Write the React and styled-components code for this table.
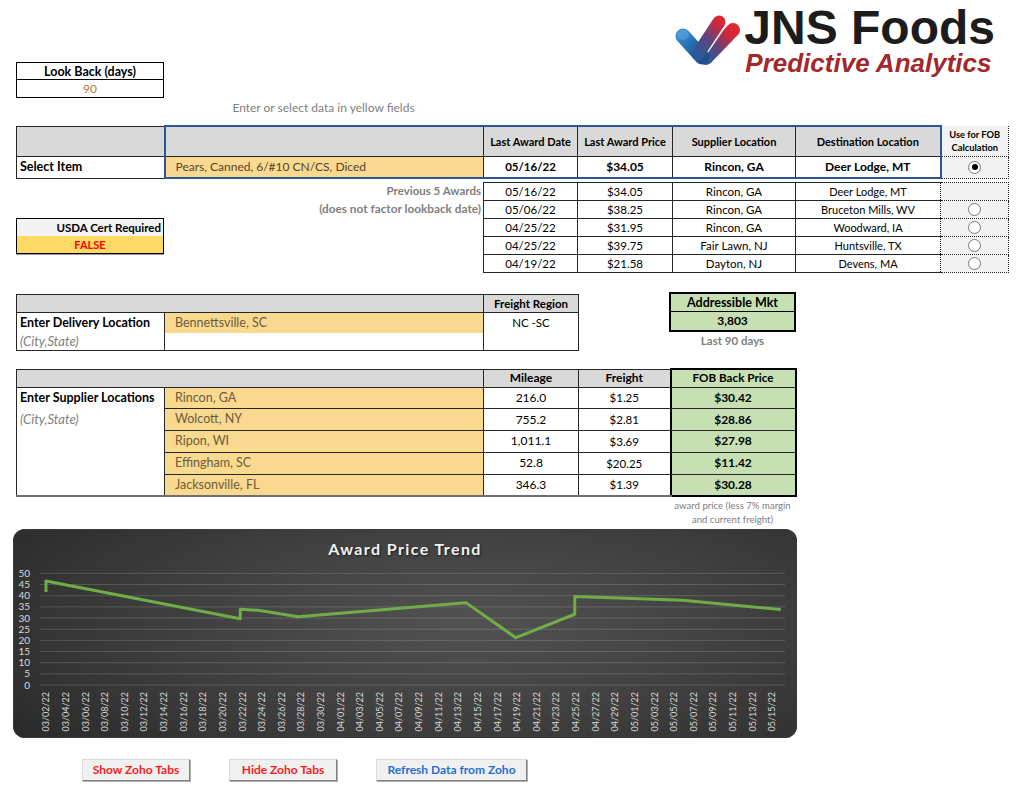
import React from 'react'
import styled, { createGlobalStyle } from 'styled-components'

const YELLOW = '#f8d98f'
const GRAY = '#d9d9d9'
const GREEN = '#c6e0b4'
const BLUE = '#2f5597'
const LINE = '#262626'

const GlobalStyle = createGlobalStyle`
  html, body {
    margin: 0;
    padding: 0;
    background: #fff;
  }
  body {
    font-family: Lato, 'Liberation Sans', sans-serif;
    color: #000;
  }
`

const Page = styled.div`
  width: 1024px;
  height: 790px;
  padding-left: 16px;
  box-sizing: border-box;
  overflow: hidden;
`

const TopArea = styled.div`
  display: grid;
  grid-template-columns: 148px 319px 1fr;
  grid-template-rows: 62px 36px 27px;
`

const Logo = styled.div`
  grid-column: 3;
  grid-row: 1 / 3;
  justify-self: end;
  margin-right: 29px;
  padding-top: 6px;
  display: flex;
  align-items: flex-start;
  gap: 5px;
`

const Brand = styled.div`
  display: flex;
  flex-direction: column;
  font-family: 'Liberation Sans', Arial, sans-serif;
  font-weight: 700;
`

const BrandName = styled.div`
  font-size: 48px;
  line-height: 44px;
  color: #1c1c1c;
  margin-left: -3px;
`

const BrandTag = styled.div`
  font-size: 26px;
  line-height: 26px;
  font-style: italic;
  color: #a3282b;
  margin-left: -2px;
`

const LookBack = styled.div`
  grid-column: 1;
  grid-row: 2;
  border: 1px solid #000;
  display: grid;
  grid-template-rows: 17px 17px;
`

const LookBackHead = styled.div`
  border-bottom: 1px solid #000;
  font-size: 12.5px;
  font-weight: 700;
  text-align: center;
  line-height: 17px;
`

const LookBackValue = styled.div`
  font-size: 12px;
  color: #b9743a;
  text-align: center;
  line-height: 17px;
`

const Hint = styled.div`
  grid-column: 2;
  grid-row: 3;
  padding-top: 2px;
  text-align: center;
  font-size: 12px;
  color: #808080;
`

const Sheet = styled.table`
  border-collapse: collapse;
  table-layout: fixed;
  margin-top: ${p => p.$mt || 0}px;
`

const Col = styled.col`
  width: ${p => p.$w}px;
`

const Cell = styled.td`
  height: ${p => p.$h || 18}px;
  padding: 0 4px;
  border: 1px solid ${LINE};
  box-sizing: border-box;
  font-size: 11.5px;
  line-height: 1;
  text-align: center;
  white-space: nowrap;
  overflow: hidden;
  background: #fff;
  ${p => p.$bt && `border-top: 2px solid ${BLUE};`}
  ${p => p.$bb && `border-bottom: 2px solid ${BLUE};`}
  ${p => p.$bl && `border-left: 2px solid ${BLUE};`}
  ${p => p.$br && `border-right: 2px solid ${BLUE};`}
  ${p => p.$openTop && 'border-top: none;'}
  ${p => p.$openBottom && 'border-bottom: none;'}
  ${p => p.$openRight && 'border-right: none;'}
  ${p => p.$foot && 'border-bottom: 2px solid #6f6f6f;'}
`

const HeadCell = styled(Cell)`
  background: ${GRAY};
  font-size: ${p => p.$size || 11}px;
  font-weight: 700;
`

const LabelCell = styled(Cell)`
  text-align: left;
  padding-left: 3px;
  font-size: ${p => (p.$note ? 13 : 12.5)}px;
  font-weight: ${p => (p.$note ? 400 : 700)};
  font-style: ${p => (p.$note ? 'italic' : 'normal')};
  color: ${p => (p.$note ? '#808080' : '#000')};
`

const InputCell = styled(Cell)`
  background: ${p => (p.$blank ? '#fff' : YELLOW)};
  text-align: left;
  padding-left: 10px;
  font-size: ${p => (p.$big ? 12 : 12.5)}px;
  color: ${p => (p.$big ? '#54452b' : '#6e5b3c')};
`

const ValueCell = styled(Cell)`
  font-size: ${p => p.$size || (p.$bold ? 12 : 11.5)}px;
  font-weight: ${p => (p.$bold ? 700 : 400)};
`

const FobCell = styled(Cell)`
  background: #f2f2f2;
  border: 1px dotted #222;
  ${p => p.$head && `
    border-top: none;
    font-size: 9.3px;
    font-weight: 700;
    line-height: 13px;
    white-space: normal;
  `}
`

const PriceCell = styled(Cell)`
  background: ${GREEN};
  font-weight: 700;
  font-size: ${p => (p.$head ? 11.7 : 12)}px;
  border-left: 2px solid #000;
  border-right: 2px solid #000;
  ${p => p.$first && 'border-top: 2px solid #000;'}
  ${p => p.$last && 'border-bottom: 2px solid #000;'}
`

const Radio = styled.span`
  display: inline-block;
  width: 11px;
  height: 11px;
  border-radius: 50%;
  border: 1px solid #7a7a7a;
  background: radial-gradient(circle at 40% 35%, #fff 55%, #e4e4e4 100%);
  position: relative;
  vertical-align: middle;

  &::after {
    content: '';
    display: ${p => (p.$on ? 'block' : 'none')};
    position: absolute;
    left: 2.5px;
    top: 2.5px;
    width: 6px;
    height: 6px;
    border-radius: 50%;
    background: #000;
  }
`

const AwardsArea = styled.div`
  display: flex;
  margin-top: 3px;
`

const AwardsSide = styled.div`
  width: 467px;
  display: flex;
  flex-direction: column;
`

const SideNote = styled.div`
  height: 18px;
  line-height: 18px;
  padding-right: 2px;
  text-align: right;
  font-size: ${p => p.$size || 11.5}px;
  font-weight: 700;
  color: #808080;
`

const UsdaBox = styled.div`
  width: 148px;
  border: 1px solid #000;
  box-sizing: border-box;
  box-shadow: 0 1px 0 #9a9a9a;
`

const UsdaHead = styled.div`
  height: 17px;
  line-height: 17px;
  padding-right: 2px;
  background: #f2f2f2;
  text-align: right;
  font-size: 11.5px;
  font-weight: 700;
`

const UsdaValue = styled.div`
  height: 17px;
  line-height: 17px;
  background: #ffd966;
  color: #ff0000;
  text-align: center;
  font-size: 11px;
  font-weight: 700;
`

const MidArea = styled.div`
  display: flex;
  align-items: flex-start;
  margin-top: 19px;
`

const MktBlock = styled.div`
  margin-left: 90px;
  width: 127px;
`

const MktBox = styled.div`
  border: 2px solid #000;
  background: ${GREEN};
  box-sizing: border-box;
  height: 40px;
  display: grid;
  grid-template-rows: 1fr 1fr;
  font-size: 12.5px;
  font-weight: 700;
  text-align: center;
`

const MktHead = styled.div`
  border-bottom: 1px solid #000;
  line-height: 17px;
`

const MktValue = styled.div`
  line-height: 18px;
  font-size: 12px;
`

const MktNote = styled.div`
  margin-top: 2px;
  text-align: center;
  font-size: 11.5px;
  font-weight: 700;
  color: #808080;
`

const SupplierArea = styled.div`
  margin-top: 17px;
`

const PriceNote = styled.div`
  margin-left: 650px;
  width: 133px;
  padding-top: 2px;
  text-align: center;
  font-size: 9.6px;
  line-height: 14px;
  color: #808080;
`

const ChartCard = styled.div`
  margin-top: 2px;
  margin-left: -3px;
  width: 784px;
  height: 209px;
  border-radius: 12px;
  overflow: hidden;
  background: radial-gradient(ellipse 75% 95% at 58% 45%, #525252 0%, #3f3f3f 50%, #282828 100%);
  box-shadow: inset 0 0 0 1px #3a3a3a;
`

const ChartTitle = styled.div`
  height: 36px;
  box-sizing: border-box;
  padding-top: 11px;
  line-height: 18px;
  text-align: center;
  color: #f2f2f2;
  font-size: 16px;
  font-weight: 700;
  letter-spacing: 1.4px;
  text-shadow: 1px 1px 2px rgba(0, 0, 0, 0.6);
`

const ButtonRow = styled.div`
  display: flex;
  gap: 39px;
  margin-top: 21px;
  padding-left: 66px;
`

const ZohoButton = styled.button`
  width: ${p => p.$w}px;
  height: 22px;
  padding: 0;
  background: #f0f0f0;
  border: 1px solid #dadada;
  border-right-color: #7f7f7f;
  border-bottom-color: #7f7f7f;
  box-shadow: 1px 1px 0 #b0b0b0;
  font-family: Lato, 'Liberation Sans', sans-serif;
  font-size: 12px;
  font-weight: 700;
  color: ${p => (p.$tone === 'blue' ? '#1f6fd1' : '#ff1a1a')};
`

const LogoMark = () => (
  <svg width="74" height="62" viewBox="0 0 74 62">
    <defs>
      <linearGradient id="jnsGrad" gradientUnits="userSpaceOnUse" x1="26" y1="54" x2="64" y2="16">
        <stop offset="0" stopColor="#1b5f9f" />
        <stop offset="0.45" stopColor="#5a4680" />
        <stop offset="0.8" stopColor="#d2283a" />
        <stop offset="1" stopColor="#e5262c" />
      </linearGradient>
      <linearGradient id="jnsBlue" gradientUnits="userSpaceOnUse" x1="8" y1="22" x2="36" y2="54">
        <stop offset="0" stopColor="#4a9ad8" />
        <stop offset="0.5" stopColor="#2570b3" />
        <stop offset="1" stopColor="#1b4f8c" />
      </linearGradient>
    </defs>
    <line x1="38" y1="52" x2="65" y2="24" stroke="url(#jnsGrad)" strokeWidth="14" strokeLinecap="round" />
    <line x1="29" y1="48" x2="51" y2="16" stroke="#fff" strokeWidth="16.5" strokeLinecap="round" />
    <line x1="15" y1="30" x2="34" y2="51" stroke="url(#jnsBlue)" strokeWidth="15" strokeLinecap="round" />
    <line x1="30" y1="48" x2="51" y2="16" stroke="url(#jnsGrad)" strokeWidth="13" strokeLinecap="round" />
    <ellipse cx="15" cy="29" rx="6" ry="5" fill="#5aa7e0" opacity="0.55" />
  </svg>
)

const TOP_COLS = [148, 319, 94, 95, 123, 145, 68]
const AWARD_COLS = [94, 95, 123, 145, 68]
const DELIVERY_COLS = [148, 319, 95]
const SUPPLIER_COLS = [148, 319, 95, 92, 125]

const awards = [
  ['05/16/22', '$34.05', 'Rincon, GA', 'Deer Lodge, MT', false],
  ['05/06/22', '$38.25', 'Rincon, GA', 'Bruceton Mills, WV', true],
  ['04/25/22', '$31.95', 'Rincon, GA', 'Woodward, IA', true],
  ['04/25/22', '$39.75', 'Fair Lawn, NJ', 'Huntsville, TX', true],
  ['04/19/22', '$21.58', 'Dayton, NJ', 'Devens, MA', true]
]

const suppliers = [
  ['Rincon, GA', '216.0', '$1.25', '$30.42'],
  ['Wolcott, NY', '755.2', '$2.81', '$28.86'],
  ['Ripon, WI', '1,011.1', '$3.69', '$27.98'],
  ['Effingham, SC', '52.8', '$20.25', '$11.42'],
  ['Jacksonville, FL', '346.3', '$1.39', '$30.28']
]

const xLabels = (() => {
  const out = []
  let m = 3
  let d = 2
  while (!(m === 5 && d > 15)) {
    out.push(`${String(m).padStart(2, '0')}/${String(d).padStart(2, '0')}/22`)
    d += 2
    const len = m === 3 ? 31 : 30
    if (d > len) {
      d -= len
      m += 1
    }
  }
  return out
})()

// [days since 03/02, price]
const trend = [
  [0, 41.7], [0, 46.6], [19.8, 29.7], [19.8, 33.9], [21.8, 33.4], [25.7, 30.6],
  [42.8, 36.9], [47.9, 21.2], [53.9, 31.7], [53.9, 39.7], [64.9, 38], [74.9, 33.8]
]

const px = day => 33 + day * 9.81
const py = v => 120 - v * 2.232

const TrendChart = () => (
  <svg width="784" height="173" viewBox="0 0 784 173">
    {[0, 5, 10, 15, 20, 25, 30, 35, 40, 45, 50].map(v => (
      <g key={v}>
        <line x1="27" x2="772" y1={py(v)} y2={py(v)} stroke="rgba(255,255,255,0.16)" strokeWidth="1" />
        <text x="17" y={py(v) + 3.5} textAnchor="end" fontSize="10" fill="#d9d9d9" fontFamily="Lato, sans-serif">{v}</text>
      </g>
    ))}
    {xLabels.map((label, i) => {
      const x = 33 + i * 19.62 + 3.3
      return (
        <text
          key={label}
          x={x}
          y="127"
          textAnchor="end"
          fontSize="9"
          fill="#d9d9d9"
          fontFamily="Lato, sans-serif"
          transform={`rotate(-90 ${x} 127)`}
        >
          {label}
        </text>
      )
    })}
    <polyline
      points={trend.map(([d, v]) => `${px(d)},${py(v)}`).join(' ')}
      fill="none"
      stroke="#70ad47"
      strokeWidth="3"
      strokeLinejoin="round"
    />
  </svg>
)

export default function App () {
  return (
    <Page>
      <GlobalStyle />
      <TopArea>
        <Logo>
          <LogoMark />
          <Brand>
            <BrandName>JNS Foods</BrandName>
            <BrandTag>Predictive Analytics</BrandTag>
          </Brand>
        </Logo>
        <LookBack>
          <LookBackHead>Look Back (days)</LookBackHead>
          <LookBackValue>90</LookBackValue>
        </LookBack>
        <Hint>Enter or select data in yellow fields</Hint>
      </TopArea>

      <Sheet>
        <colgroup>{TOP_COLS.map((w, i) => <Col key={i} $w={w} />)}</colgroup>
        <tbody>
          <tr>
            <HeadCell $h={30} />
            <HeadCell $h={30} $bt $bl />
            <HeadCell $h={30} $bt>Last Award Date</HeadCell>
            <HeadCell $h={30} $bt>Last Award Price</HeadCell>
            <HeadCell $h={30} $bt>Supplier Location</HeadCell>
            <HeadCell $h={30} $bt $br>Destination Location</HeadCell>
            <FobCell $h={30} $head>Use for FOB<br />Calculation</FobCell>
          </tr>
          <tr>
            <LabelCell $h={22}>Select Item</LabelCell>
            <InputCell $h={22} $big $bl $bb>Pears, Canned, 6/#10 CN/CS, Diced</InputCell>
            <ValueCell $h={22} $bold $size={11.5} $bb>05/16/22</ValueCell>
            <ValueCell $h={22} $bold $bb>$34.05</ValueCell>
            <ValueCell $h={22} $bold $bb>Rincon, GA</ValueCell>
            <ValueCell $h={22} $bold $bb $br>Deer Lodge, MT</ValueCell>
            <FobCell $h={22}><Radio $on /></FobCell>
          </tr>
        </tbody>
      </Sheet>

      <AwardsArea>
        <AwardsSide>
          <SideNote>Previous 5 Awards</SideNote>
          <SideNote $size={11.8}>(does not factor lookback date)</SideNote>
          <UsdaBox>
            <UsdaHead>USDA Cert Required</UsdaHead>
            <UsdaValue>FALSE</UsdaValue>
          </UsdaBox>
        </AwardsSide>
        <Sheet>
          <colgroup>{AWARD_COLS.map((w, i) => <Col key={i} $w={w} />)}</colgroup>
          <tbody>
            {awards.map(([date, price, from, to, pick], i) => (
              <tr key={i}>
                <ValueCell>{date}</ValueCell>
                <ValueCell>{price}</ValueCell>
                <ValueCell>{from}</ValueCell>
                <ValueCell $openRight $size={11}>{to}</ValueCell>
                <FobCell>{pick && <Radio />}</FobCell>
              </tr>
            ))}
          </tbody>
        </Sheet>
      </AwardsArea>

      <MidArea>
        <Sheet $mt={2}>
          <colgroup>{DELIVERY_COLS.map((w, i) => <Col key={i} $w={w} />)}</colgroup>
          <tbody>
            <tr>
              <HeadCell colSpan={2} />
              <HeadCell $size={11.5}>Freight Region</HeadCell>
            </tr>
            <tr>
              <LabelCell $h={20} $openBottom>Enter Delivery Location</LabelCell>
              <InputCell $h={20} $openBottom>Bennettsville, SC</InputCell>
              <ValueCell $h={20} $openBottom>NC -SC</ValueCell>
            </tr>
            <tr>
              <LabelCell $note $openTop>(City,State)</LabelCell>
              <InputCell $blank $openTop />
              <ValueCell $openTop />
            </tr>
          </tbody>
        </Sheet>
        <MktBlock>
          <MktBox>
            <MktHead>Addressible Mkt</MktHead>
            <MktValue>3,803</MktValue>
          </MktBox>
          <MktNote>Last 90 days</MktNote>
        </MktBlock>
      </MidArea>

      <SupplierArea>
        <Sheet>
          <colgroup>{SUPPLIER_COLS.map((w, i) => <Col key={i} $w={w} />)}</colgroup>
          <tbody>
            <tr>
              <HeadCell colSpan={2} />
              <HeadCell $size={12}>Mileage</HeadCell>
              <HeadCell $size={12}>Freight</HeadCell>
              <PriceCell $head $first>FOB Back Price</PriceCell>
            </tr>
            {suppliers.map(([name, miles, freight, fob], i) => {
              const last = i === suppliers.length - 1
              return (
                <tr key={name}>
                  <LabelCell
                    $h={21.8}
                    $note={i === 1}
                    $openTop={i > 0}
                    $openBottom={!last}
                    $foot={last}
                  >
                    {i === 0 ? 'Enter Supplier Locations' : i === 1 ? '(City,State)' : ''}
                  </LabelCell>
                  <InputCell $h={21.8} $foot={last}>{name}</InputCell>
                  <ValueCell $h={21.8} $size={12} $foot={last}>{miles}</ValueCell>
                  <ValueCell $h={21.8} $foot={last}>{freight}</ValueCell>
                  <PriceCell $h={21.8} $last={last}>{fob}</PriceCell>
                </tr>
              )
            })}
          </tbody>
        </Sheet>
        <PriceNote>award price (less 7% margin<br />and current freight)</PriceNote>
      </SupplierArea>

      <ChartCard>
        <ChartTitle>Award Price Trend</ChartTitle>
        <TrendChart />
      </ChartCard>

      <ButtonRow>
        <ZohoButton $w={108}>Show Zoho Tabs</ZohoButton>
        <ZohoButton $w={108}>Hide Zoho Tabs</ZohoButton>
        <ZohoButton $w={151} $tone='blue'>Refresh Data from Zoho</ZohoButton>
      </ButtonRow>
    </Page>
  )
}
